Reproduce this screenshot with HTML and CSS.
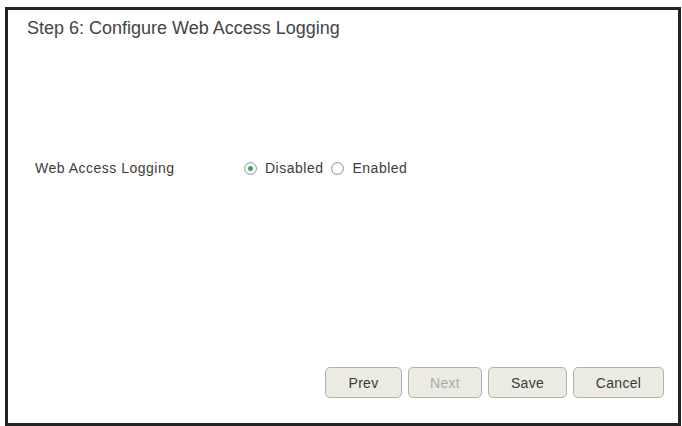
FILE: index.html
```html
<!DOCTYPE html>
<html>
<head>
<meta charset="utf-8">
<link rel="stylesheet" href="styles.css">
</head>
<body>
<div class="frame">
  <div class="title">Step 6: Configure Web Access Logging</div>
  <div class="row">
    <div class="label">Web Access Logging</div>
    <div class="options">
      <span class="radio checked"></span><span class="opt">Disabled</span>
      <span class="radio"></span><span class="opt">Enabled</span>
    </div>
  </div>
  <div class="buttons">
    <button class="btn prev">Prev</button>
    <button class="btn next" disabled>Next</button>
    <button class="btn save">Save</button>
    <button class="btn cancel">Cancel</button>
  </div>
</div>
</body>
</html>
```
FILE: styles.css
```css
html, body {
  margin: 0;
  padding: 0;
  background: #ffffff;
}
body {
  font-family: "Liberation Sans", Arial, sans-serif;
  color: #3c3c3c;
}
.frame {
  box-sizing: border-box;
  margin: 7px 1px 0 5px;
  width: 676px;
  height: 419px;
  border: 3px solid #232323;
  display: flex;
  flex-direction: column;
}
.title {
  font-size: 18px;
  padding: 7px 0 0 19px;
  line-height: 22px;
  color: #444444;
}
.row {
  display: flex;
  align-items: center;
  margin-top: 121px;
  padding-left: 27px;
  font-size: 14px;
  letter-spacing: 0.5px;
  color: #3c3c3c;
}
.label {
  width: 209px;
}
.options {
  display: flex;
  align-items: center;
}
.radio {
  box-sizing: border-box;
  width: 13px;
  height: 13px;
  border-radius: 50%;
  border: 1px solid #8e9aa6;
  background: radial-gradient(circle, #ffffff 40%, #e2e6ea 100%);
  display: flex;
  align-items: center;
  justify-content: center;
  margin-right: 8px;
}
.radio.checked::after {
  content: "";
  width: 5px;
  height: 5px;
  border-radius: 50%;
  background: #3fa34d;
}
.opt {
  margin-right: 8px;
}
.buttons {
  margin-top: auto;
  margin-bottom: 25px;
  display: flex;
  justify-content: flex-end;
  gap: 6px;
  padding-right: 14px;
}
.btn {
  box-sizing: border-box;
  height: 31px;
  border: 1px solid #b2b2aa;
  border-radius: 5px;
  background: #ecebe2;
  font-family: "Liberation Sans", Arial, sans-serif;
  font-size: 14px;
  letter-spacing: 0.3px;
  color: #3a3a3a;
  padding: 0;
}
.prev { width: 77px; }
.next { width: 74px; color: #a8a8a8; }
.save { width: 79px; }
.cancel { width: 91px; }
```
